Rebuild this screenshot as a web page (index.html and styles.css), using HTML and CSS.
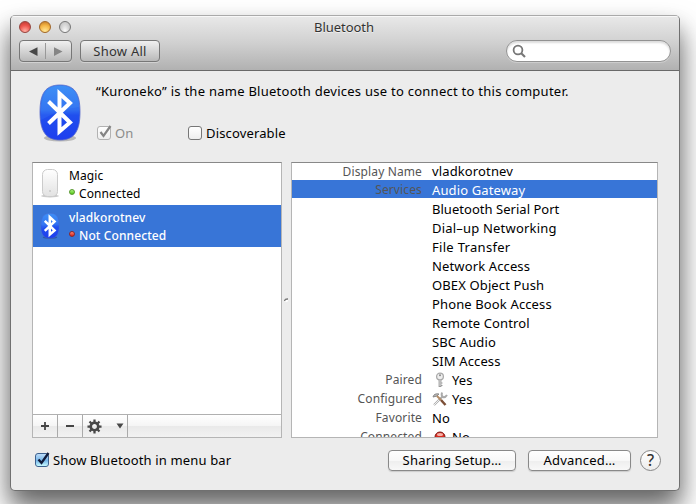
FILE: index.html
```html
<!DOCTYPE html>
<html lang="en">
<head>
<meta charset="utf-8">
<title>Bluetooth</title>
<link rel="stylesheet" href="styles.css">
</head>
<body>
<svg class="defs" width="0" height="0" aria-hidden="true">
  <defs>
    <linearGradient id="blue" x1="0" y1="0" x2="0" y2="1"><stop offset="0" stop-color="#398bf5"/><stop offset=".45" stop-color="#2f6df0"/><stop offset=".55" stop-color="#204fee"/><stop offset="1" stop-color="#1e3eee"/></linearGradient>
    <symbol id="bt" viewBox="0 0 44 60">
      <ellipse cx="22" cy="54" rx="16" ry="3.5" fill="#000" opacity=".22"/>
      <path d="M22 1C37 1 42 10 42 28S37 56 22 56 2 46 2 28 7 1 22 1Z" fill="url(#blue)" stroke="#5567ca" stroke-width=".8"/>
      <path d="M3 30C3 10 9 2 22 2S41 9 41 23Q25 24 3 36Z" fill="#66b2ff" opacity=".12"/>
      <path d="M10.500 17.500 32 38.500 21.500 47.500V9.500L32 19 10.500 39.500" fill="none" stroke="#fff"/>
    </symbol>
  </defs>
</svg>
<main class="window">
  <header class="head">
    <div class="titlebar">
      <div class="lights"><i class="red"></i><i class="amber"></i><i class="gray"></i></div>
      <h1>Bluetooth</h1>
    </div>
    <div class="tools">
      <div class="nav"><svg width="51" height="20" viewBox="0 0 51 20"><path d="M9 10.500 17.500 6.200V15Z" fill="#484848"/><path d="M42.500 10.500 34 6.200V15Z" fill="#858585"/><path d="M25.500 2V18" stroke="#999"/></svg></div>
      <div class="showall">Show All</div>
      <div class="search"><svg width="16" height="16" viewBox="0 0 16 16"><circle cx="6" cy="6" r="4.400" fill="none" stroke="#777" stroke-width="1.800"/><path d="M9 9 13 13" stroke="#777" stroke-width="2.200"/></svg></div>
    </div>
  </header>
  <section class="intro">
    <svg class="logo" width="44" height="60"><use href="#bt"/></svg>
    <div class="about">
      <p>“Kuroneko” is the name Bluetooth devices use to connect to this computer.</p>
      <div class="options">
        <div class="option off"><span class="box"><svg width="17" height="17" viewBox="0 0 17 17"><path d="M4.500 8 7.500 12 14.500 2" fill="none" stroke="#858585" stroke-width="2.200"/></svg></span><span>On</span></div>
        <div class="option"><span class="box"></span><span>Discoverable</span></div>
      </div>
    </div>
  </section>
  <section class="panes">
    <div class="devices">
      <div class="device"><svg width="20" height="32" viewBox="0 0 20 32"><defs><linearGradient id="mouse" x2="0" y2="1"><stop stop-color="#fff"/><stop offset="1" stop-color="#e2e2e2"/></linearGradient></defs><ellipse cx="10" cy="28" rx="9" ry="1.500" fill="#ccc"/><rect x="2.500" y="1.500" width="15" height="27" rx="5" fill="url(#mouse)" stroke="#cbcbcb"/><circle cx="10" cy="23" r="1" fill="#c9c9c9"/></svg>
        <div class="who"><b>Magic</b><span class="state"><i class="dot green"></i><span>Connected</span></span></div></div>
      <div class="device selected"><svg class="mini" width="20" height="29"><use href="#bt"/></svg>
        <div class="who"><b>vladkorotnev</b><span class="state"><i class="dot"></i><span>Not Connected</span></span></div></div>
      <div class="space"></div>
      <div class="actions">
        <span><svg width="10" height="10" viewBox="0 0 10 10"><path d="M1 5H9M5 1V9" stroke="#444" stroke-width="1.800"/></svg></span>
        <span><svg width="10" height="10" viewBox="0 0 10 10"><path d="M1 5H9" stroke="#444" stroke-width="1.800"/></svg></span>
        <span class="gear"><svg width="15" height="15" viewBox="-8 -8 16 16"><circle r="4" fill="none" stroke="#484848" stroke-width="2.800"/><path d="M0-7.500V-4M0 7.500V4M-7.500 0H-4M7.500 0H4M-5.300-5.300-3-3M5.300 5.300 3 3M-5.300 5.300-3 3M5.300-5.300 3-3" stroke="#484848" stroke-width="2.400"/></svg><svg width="8" height="6" viewBox="0 0 8 6"><path d="M.5.500H7.500L4 5.500Z" fill="#484848"/></svg></span>
      </div>
    </div>
    <div class="split"><svg width="5" height="4" viewBox="0 0 5 4"><circle cx="2.500" cy="2.500" r="1.500" fill="#fff"/><path d="M.5 3Q.8.800 4 1" fill="none" stroke="#777" stroke-width="1.300"/></svg></div>
    <div class="details">
      <div class="row first"><span class="label">Display Name</span><span>vladkorotnev</span></div>
      <div class="row chosen"><span class="label">Services</span><span>Audio Gateway</span></div>
      <div class="row tight"><span class="label"></span><span>Bluetooth Serial Port</span></div>
      <div class="row wide"><span class="label"></span><span>Dial–up Networking</span></div>
      <div class="row wider"><span class="label"></span><span>File Transfer</span></div>
      <div class="row"><span class="label"></span><span>Network Access</span></div>
      <div class="row"><span class="label"></span><span>OBEX Object Push</span></div>
      <div class="row"><span class="label"></span><span>Phone Book Access</span></div>
      <div class="row"><span class="label"></span><span>Remote Control</span></div>
      <div class="row"><span class="label"></span><span>SBC Audio</span></div>
      <div class="row"><span class="label"></span><span>SIM Access</span></div>
      <div class="row"><span class="label">Paired</span><svg width="16" height="16" viewBox="0 0 16 16"><circle cx="8" cy="4.500" r="3.400" fill="#eee" stroke="#aaa" stroke-width="1.300"/><circle cx="8" cy="3.300" r="1" fill="#888"/><path d="M8 7.500V15" stroke="#999" stroke-width="2.800"/><path d="M8 7.500V14" stroke="#ddd"/><path d="M9 11H10.500M9 13.500H10.500" stroke="#999"/></svg><span>Yes</span></div>
      <div class="row"><span class="label">Configured</span><svg width="16" height="16" viewBox="0 0 16 16"><path d="M2 14 11 5M10 1.500Q9 5 11 6T15 4" fill="none" stroke="#aaa" stroke-width="2"/><path d="M1 6Q2 2 7 3L5 5Z" fill="#bbb" stroke="#888"/><path d="M5 5 9 9" stroke="#b38b65" stroke-width="2"/><path d="M9 9 13.500 14" stroke="#7c4f36" stroke-width="2.500"/><path d="M2 14 7 9" stroke="#eee"/></svg><span>Yes</span></div>
      <div class="row"><span class="label">Favorite</span><span>No</span></div>
      <div class="row"><span class="label">Connected</span><svg width="16" height="16" viewBox="0 0 16 16"><circle cx="8" cy="8" r="5" fill="#d92c20" stroke="#7c1c18"/><ellipse cx="8" cy="5.500" rx="3" ry="1.500" fill="#f8b1a8"/></svg><span>No</span></div>
    </div>
  </section>
  <footer class="foot">
    <div class="option menu"><span class="box on"><svg width="17" height="17" viewBox="0 0 17 17"><path d="M4.500 8.500 7.500 12 14.500 2" fill="none" stroke="#101a38" stroke-width="2.300"/></svg></span><span>Show Bluetooth in menu bar</span></div>
    <div class="button sharing">Sharing Setup…</div>
    <div class="button advanced">Advanced…</div>
    <div class="help">?</div>
  </footer>
</main>
</body>
</html>
```
FILE: styles.css
```css
* { box-sizing: border-box; }
html, body { height: 100%; }
body { margin: 0; padding: 15px 0 0 10px; overflow: hidden; background: #fff; font: 13px/18px "Noto Sans", "Open Sans", sans-serif; color: #000; }
svg { display: block; flex: none; }
.defs { position: absolute; }
.window { width: 670px; height: 476px; border: 1px solid #707070; border-top-color: #aaa; border-radius: 5px; background: #ececec; box-shadow: 0 18px 30px rgba(0,0,0,.5), 0 12px 20px rgba(0,0,0,.22); overflow: hidden; }
.head { height: 55px; background: linear-gradient(#e9e9e9, #d0d0d0 50%, #b1b1b1); border-bottom: 1px solid #696969; box-shadow: inset 0 1px #f8f8f8; }
.titlebar { display: grid; grid-template-columns: 100px 1fr 102px; height: 24px; }
.lights { display: flex; gap: 8px; padding: 5px 0 0 8px; }
.lights i { width: 12px; height: 12px; border-radius: 50%; border: 1px solid #777; background: radial-gradient(ellipse at 50% 100%, #fff, #d8d8d8 50%, #b5b5b5); }
.lights .red { border-color: #97443e; background: radial-gradient(circle at 50% 90%, #ffafa4, #ec544c 55%, #b83831); }
.lights .amber { border-color: #a16627; background: radial-gradient(circle at 50% 90%, #ffe99a, #f4b545 55%, #bd7525); }
h1 { margin: 0; padding-top: 2px; text-align: center; font: inherit; color: #333; text-shadow: 0 1px #eee; letter-spacing: -.04px; }
.tools { display: flex; padding: 0 8px; }
.nav, .showall { height: 22px; border: 1px solid #777; border-radius: 4px; background: linear-gradient(#f0f0f0, #b9b9b9); box-shadow: 0 1px rgba(255,255,255,.35); }
.nav { width: 53px; }
.showall { width: 80px; margin-left: 8px; text-align: center; line-height: 20px; color: #333; letter-spacing: .25px; }
.search { width: 165px; height: 22px; margin-left: auto; padding: 3px 5px; border: 1px solid #929292; border-radius: 11px; background: #fff; box-shadow: inset 0 2px 2px #ddd, 0 1px #ccc; }
.intro { display: flex; height: 91px; padding-left: 27px; }
.logo { margin-top: 13px; stroke-width: 4px; }
.about { padding: 11px 0 0 14px; }
.about p { margin: 0; letter-spacing: .26px; white-space: nowrap; }
.options { display: flex; margin-top: 24px; }
.option { display: flex; align-items: center; gap: 4px; white-space: nowrap; letter-spacing: .15px; }
.option.off { width: 91px; color: #8b8b8b; }
.options .option { padding-left: 1px; }
.box { width: 14px; height: 14px; border: 1px solid #777; border-radius: 3px; background: linear-gradient(#fff, #eee); }
.off .box { border-color: #b2b2b2; }
.box svg { margin: -3px 0 0 -2px; }
.box.on { border-color: #3d618f; background: linear-gradient(#bddcf8, #76b6e9 55%, #c8fbff); }
.panes { display: flex; height: 276px; padding-left: 21px; }
.devices { display: flex; flex-direction: column; width: 250px; border: 1px solid #b5b5b5; border-top-color: #888; background: #fff; }
.device { display: flex; align-items: center; gap: 9px; height: 42px; padding-left: 7px; font-size: 12px; letter-spacing: .1px; }
.device b { display: block; font-weight: inherit; height: 18px; }
.who { padding-top: 2px; }
.mini { stroke-width: 5.5px; }
.selected { background: #3875d7; color: #fff; font-weight: 500; }
.state { display: flex; align-items: center; gap: 4px; }
.dot { width: 6px; height: 6px; margin-top: -4px; border-radius: 50%; border: 1px solid #8f2627; background: linear-gradient(#ff8776, #d6221c); }
.green { border-color: #55972c; background: linear-gradient(#a9f57d, #56c51b); }
.space { flex: 1; }
.actions { display: flex; height: 23px; border-top: 1px solid #b0b0b0; background: linear-gradient(#fff, #f5f5f5 48%, #e9e9e9 50%, #f2f2f2); }
.actions span { display: flex; align-items: center; justify-content: center; width: 25px; border-right: 1px solid #aaa; }
.actions .gear { width: 45px; gap: 14px; }
.split { display: flex; align-items: center; justify-content: center; width: 9px; }
.details { width: 367px; border: 1px solid #b5b5b5; border-top-color: #888; background: #fff; overflow: hidden; }
.row { display: flex; align-items: center; height: 19px; line-height: 19px; white-space: nowrap; letter-spacing: .13px; }
.row > span:last-child { padding-top: 2px; }
.row.first { height: 17px; }
.row.first > span:last-child { padding-top: 0; }
.row.tight { letter-spacing: .03px; }
.row.wide { letter-spacing: .2px; }
.row.wider { letter-spacing: .3px; }
.label { width: 130px; margin-right: 10px; text-align: right; font-size: 12px; color: #555; line-height: 17px; padding-bottom: 1px; }
.row > svg { margin-right: 4px; }
.chosen { background: linear-gradient(#3875d7 18px, #fff 18px); color: #fff; }
.foot { display: flex; align-items: flex-start; padding: 12px 18px 0 24px; }
.menu { width: 353px; height: 20px; }
.button { height: 21px; border: 1px solid #898989; border-radius: 4px; background: linear-gradient(#fff, #f8f8f8 50%, #eee 52%, #f8f8f8); box-shadow: 0 1px 1px #ccc; text-align: center; line-height: 19px; letter-spacing: .2px; }
.sharing { width: 128px; margin-right: 12px; }
.advanced { width: 103px; margin-right: 9px; }
.help { width: 21px; height: 21px; border: 1px solid #868686; border-radius: 50%; background: linear-gradient(#fff, #ececec); text-align: center; font-size: 16px; font-weight: 500; line-height: 19px; color: #333; }
```
